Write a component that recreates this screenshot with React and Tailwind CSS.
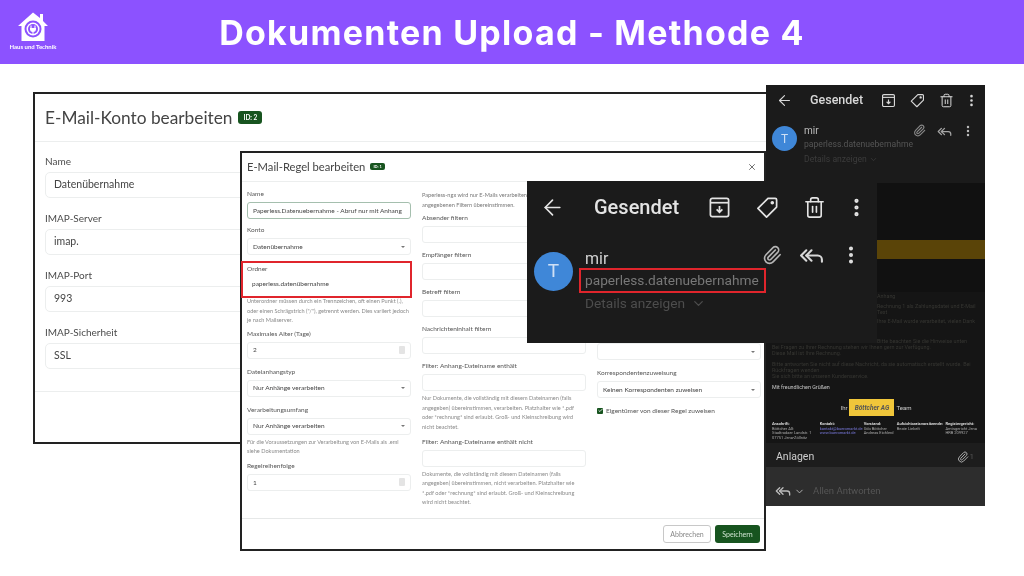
import React from 'react';
import { ArrowLeft, Trash2, EllipsisVertical, Paperclip, ReplyAll, ChevronDown, X, Check } from 'lucide-react';

const uiFont = { fontFamily: 'Lato, sans-serif' };

// Archive box with arrow, not quite the lucide one
function MoveToInbox({ size = 24 }) {
  return (
    <svg width={size} height={size} viewBox="0 0 24 24" fill="none" stroke="currentColor" strokeWidth="1.8">
      <rect x="2.5" y="2.5" width="19" height="19" rx="2" />
      <path d="M2.5 7h19" />
      <path d="M12 10.5v6M9 14l3 3 3-3" />
    </svg>
  );
}

// Label tag, square corner top right
function LabelTag({ size = 24 }) {
  return (
    <svg width={size} height={size} viewBox="0 0 24 24" fill="none" stroke="currentColor" strokeWidth="1.8" strokeLinejoin="round">
      <path d="M21.5 4v7.500L11 22 2 13 12.500 2.500H20a1.500 1.500 0 0 1 1.500 1.500z" />
      <circle cx="17" cy="7" r="1" fill="currentColor" />
    </svg>
  );
}

function HouseLogo() {
  return (
    <svg width="32" height="32" viewBox="0 0 32 32">
      <path d="M16 1.5 L23 7 V3 H26 V10 L31 15 H27.5 V30 H4.5 V15 H1 Z" fill="#fff" />
      <circle cx="16" cy="18" r="8.5" fill="#8c52ff" />
      <circle cx="16" cy="18" r="6.5" fill="#fff" />
      <circle cx="16" cy="18" r="5" fill="#8c52ff" />
      <path d="M14 14.5v3M18 14.5v3M13.5 17.5h5c0 2-1 3-2.5 3s-2.500-1-2.500-3zM16 20.500v3" stroke="#fff" strokeWidth="1.100" fill="#fff" />
    </svg>
  );
}

function BigField({ label, value }) {
  return (
    <div>
      <div className="text-[10px] leading-[14px] text-[#4b4b4b] mb-[4px]">{label}</div>
      <div className="h-[26px] rounded-[5px] border border-[#eceeee] flex items-center pl-[8px] text-[10.5px] text-[#444]">{value}</div>
    </div>
  );
}

function Field({ label, value, kind, focus, help, className = '' }) {
  return (
    <div className={className}>
      <div className="text-[6.5px] leading-[8px] text-[#555] mb-[4px]">{label}</div>
      <div className={`h-[17px] rounded-[3px] border flex items-center justify-between pl-[5px] pr-[5px] text-[6.5px] text-[#444] ${focus ? 'border-[#a5bfae] border-[1.5px]' : 'border-[#eceeee]'}`}>
        <span className="whitespace-nowrap">{value}</span>
        {kind === 'select' && <span className="w-0 h-0 border-x-[2px] border-x-transparent border-t-[2px] border-t-[#777]" />}
        {kind === 'number' && <span className="w-[6px] h-[8px] rounded-[1px] bg-[#e4e4e4]" />}
      </div>
      {help && <p className="mt-[2px] text-[5.6px] leading-[9.6px] text-[#8a8a8a]">{help}</p>}
    </div>
  );
}

function SmallIconBar() {
  return (
    <div className="flex items-center h-[30px] pl-[10px] text-[#d8d8d8]">
      <ArrowLeft size={17} strokeWidth={1.6} />
      <span className="ml-[17px] w-[52px] text-[12.5px] font-medium whitespace-nowrap" style={{ fontFamily: 'Roboto, sans-serif' }}>Gesendet</span>
      <span className="ml-[19px]"><MoveToInbox size={15} /></span>
      <span className="ml-[14px]"><LabelTag size={15} /></span>
      <span className="ml-[14px]"><Trash2 size={15} strokeWidth={1.6} /></span>
      <span className="ml-[10px]"><EllipsisVertical size={15} strokeWidth={2.2} /></span>
    </div>
  );
}

function FooterCol({ title, lines, className = '' }) {
  return (
    <div className={`text-[4px] leading-[4.5px] text-[#aaa] whitespace-nowrap ${className}`}>
      <div className="font-bold text-[#ddd]">{title}</div>
      {lines.map((line) => <div key={line}>{line}</div>)}
    </div>
  );
}

function PhoneWindow() {
  return (
    <div className="absolute left-[766px] top-[85px] w-[219px] h-[421px] bg-[#1b1b1b] flex flex-col overflow-hidden" style={{ fontFamily: 'Roboto, sans-serif' }}>
      <SmallIconBar />
      <div className="flex pl-[6px] pt-[11px] h-[68px]">
        <div className="w-[25px] h-[25px] rounded-full bg-[#3f87d8] text-[#cfe0f5] text-[12px] flex items-center justify-center">T</div>
        <div className="ml-[7px] w-[109px]">
          <div className="text-[10px] leading-[12px] text-[#bdbdbd] mt-[-1px]">mir</div>
          <div className="text-[8.6px] leading-[12px] mt-[1px] text-[#555] whitespace-nowrap">paperless.datenuebernahme</div>
          <div className="text-[8.6px] leading-[12px] mt-[3px] text-[#3c3c3c] flex items-center gap-[2px] whitespace-nowrap">Details anzeigen <ChevronDown size={9} /></div>
        </div>
        <div className="flex items-start text-[#8a8a8a] mt-[-2px]">
          <Paperclip size={13} />
          <ReplyAll size={15} className="ml-[11px] text-[#a5a5a5]" />
          <EllipsisVertical size={14} strokeWidth={2.2} className="ml-[9px] text-[#bbb]" />
        </div>
      </div>
      {/* mail body, mostly hidden behind the bigger crop */}
      <div className="h-[109px] bg-[#111] pt-[57px]">
        <div className="h-[19px] bg-[#5a4408]" />
      </div>
      <div className="flex-none h-[151px] bg-[#151515] pl-[6px] pr-[8px] text-[#363632] text-[5.4px] leading-[6px] flex flex-col overflow-hidden">
        <div className="pl-[105px] mt-[1px]">Anhang</div>
        <div className="pl-[105px] mt-[4px]">Rechnung 1 als Zahlungsdatei und E-Mail Text</div>
        <div className="pl-[105px] mt-[3px]">Ihre E-Mail wurde verarbeitet, vielen Dank</div>
        <div className="pl-[105px] mt-[14px]">Bitte beachten Sie die Hinweise unten</div>
        <div>Bei Fragen zu Ihrer Rechnung stehen wir Ihnen gern zur Verfügung.</div>
        <div>Diese Mail ist Ihre Rechnung.</div>
        <div className="mt-[5px]">Bitte antworten Sie nicht auf diese Nachricht, da sie automatisch erstellt wurde. Bei Rückfragen wenden</div>
        <div>Sie sich bitte an unseren Kundenservice.</div>
        <div className="mt-[5px] text-[#c8c8c8]">Mit freundlichen Grüßen</div>
        <div className="flex items-center justify-center mt-[9px] gap-[2px] text-[#ccc] text-[6px] pl-[3px]">
          <span>Ihr</span>
          <span className="w-[45px] h-[17px] bg-[#f0c63a] text-[#555] text-[6.5px] font-bold italic flex items-center justify-center whitespace-nowrap">Böttcher AG</span>
          <span>Team</span>
        </div>
        <div className="flex mt-[6px]">
          <FooterCol className="w-[49px]" title="Anschrift:" lines={['Böttcher AG', 'Stadtrodaer Landstr. 1', '07751 Jena-Zöllnitz']} />
          <div className="w-[45px] text-[4px] leading-[4.5px] text-[#7b7be0] whitespace-nowrap">
            <div className="font-bold text-[#ddd]">Kontakt:</div>
            <div>kontakt@bueromarkt.de</div>
            <div>www.bueromarkt.de</div>
          </div>
          <FooterCol className="w-[34px]" title="Vorstand:" lines={['Udo Böttcher', 'Andreas Eichlerd']} />
          <FooterCol className="w-[50px]" title="Aufsichtsratsvorsitzende:" lines={['Beate Liebelt']} />
          <FooterCol title="Registergericht:" lines={['Amtsgericht Jena', 'HRB 209927']} />
        </div>
      </div>
      <div className="h-[24px] bg-[#1d1d1d] flex items-center justify-between pl-[10px] pr-[11px] pt-[3px] text-[10.500px] text-[#cfcfcf]">
        <span>Anlagen</span>
        <span className="flex items-center gap-[1px] text-[#555] text-[8px]"><Paperclip size={12} className="text-[#aaa]" />1</span>
      </div>
      <div className="h-[39px] bg-[#2d2d2d] flex items-center pl-[9px] pt-[9px] text-[#bbb]">
        <ReplyAll size={16} />
        <ChevronDown size={11} className="ml-[3px]" />
        <span className="ml-[8px] text-[9.500px] text-[#555]">Allen Antworten</span>
      </div>
    </div>
  );
}

function CropWindow() {
  return (
    <div className="absolute left-[527px] top-[181px] w-[350px] h-[162px] bg-[#1b1b1b] flex flex-col" style={{ fontFamily: 'Roboto, sans-serif' }}>
      <div className="flex items-center h-[24px] mt-[14px] pl-[13px] text-[#e4e4e4]">
        <ArrowLeft size={25} strokeWidth={1.6} />
        <span className="ml-[29px] w-[84px] text-[20px] font-medium whitespace-nowrap">Gesendet</span>
        <span className="ml-[30px]"><MoveToInbox size={23} /></span>
        <span className="ml-[25px]"><LabelTag size={23} /></span>
        <span className="ml-[24px]"><Trash2 size={23} strokeWidth={1.7} /></span>
        <span className="ml-[19px]"><EllipsisVertical size={23} strokeWidth={2.4} /></span>
      </div>
      <div className="flex mt-[30px] pl-[7px]">
        <div className="w-[39px] h-[39px] mt-[3px] rounded-full bg-[#3f87d8] text-[#cfe0f5] text-[19px] flex items-center justify-center">T</div>
        <div className="ml-[6px] w-[187px]">
          <div className="text-[16px] leading-[20px] text-[#d2d2d2] pl-[6px]">mir</div>
          <div className="mt-[-1px] h-[25px] border-[2px] border-[#e0252c] flex items-center pl-[4px] text-[13.7px] text-[#787878] whitespace-nowrap">paperless.datenuebernahme</div>
          <div className="mt-[1px] pl-[6px] text-[13.7px] leading-[18px] text-[#4d4d4d] flex items-center gap-[6px] whitespace-nowrap">Details anzeigen <ChevronDown size={15} /></div>
        </div>
        <div className="flex items-start text-[#b5b5b5] mt-[-4px]">
          <Paperclip size={20} className="ml-[-4px]" />
          <ReplyAll size={25} className="ml-[17px] text-[#d8d8d8] mt-[-2px]" />
          <EllipsisVertical size={22} strokeWidth={2.4} className="ml-[16px] text-[#e0e0e0] mt-[-1px]" />
        </div>
      </div>
    </div>
  );
}

function RuleWindow() {
  return (
    <div className="absolute left-[240px] top-[151px] w-[526px] h-[400px] bg-white border-2 border-[#222] flex flex-col" style={uiFont}>
      <div className="h-[29px] flex items-center justify-between px-[5px] border-b border-[#eceeee] flex-none">
        <div className="flex items-center gap-[5px]">
          <span className="text-[11.2px] text-[#444]">E-Mail-Regel bearbeiten</span>
          <span className="h-[7px] px-[3px] rounded-[2px] bg-[#17541f] text-white text-[4px] font-bold flex items-center">ID: 1</span>
        </div>
        <X size={10} className="text-[#555] mr-[2px]" />
      </div>
      <div className="flex-1 flex pl-[5px] pt-[8px] gap-[11px]">
        <div className="w-[164px] flex flex-col">
          <Field label="Name" value="Paperless.Datenuebernahme - Abruf nur mit Anhang" focus />
          <Field className="mt-[7px]" label="Konto" value="Datenübernahme" kind="select" />
          <div className="mt-[6px] ml-[-6px] w-[171px] h-[37px] border-2 border-[#e0252c] pl-[4px] pr-[1px] pt-[2px]">
            <div className="text-[6.5px] leading-[8px] text-[#555] mb-[3px]">Ordner</div>
            <div className="text-[6.5px] leading-[15px] text-[#444] pl-[5px]">paperless.datenübernahme</div>
          </div>
          <p className="mt-[-2px] text-[5.6px] leading-[9.6px] text-[#8a8a8a]">Unterordner müssen durch ein Trennzeichen, oft einen Punkt (.), oder einen Schrägstrich (&quot;/&quot;), getrennt werden. Dies variiert jedoch je nach Mailserver.</p>
          <Field className="mt-[5px]" label="Maximales Alter (Tage)" value="2" kind="number" />
          <Field className="mt-[9px]" label="Dateianhangstyp" value="Nur Anhänge verarbeiten" kind="select" />
          <Field className="mt-[9px]" label="Verarbeitungsumfang" value="Nur Anhänge verarbeiten" kind="select" help="Für die Voraussetzungen zur Verarbeitung von E-Mails als .eml siehe Dokumentation" />
          <Field className="mt-[6px]" label="Regelreihenfolge" value="1" kind="number" />
        </div>
        <div className="w-[164px] flex flex-col">
          <p className="text-[5.6px] leading-[9.6px] text-[#777]">Paperless-ngx wird nur E-Mails verarbeiten, die mit allen unten angegebenen Filtern übereinstimmen.</p>
          <Field className="mt-[5px]" label="Absender filtern" value="" />
          <Field className="mt-[8px]" label="Empfänger filtern" value="" />
          <Field className="mt-[8px]" label="Betreff filtern" value="" />
          <Field className="mt-[8px]" label="Nachrichteninhalt filtern" value="" />
          <Field className="mt-[8px]" label="Filter: Anhang-Dateiname enthält" value="" help="Nur Dokumente, die vollständig mit diesem Dateinamen (falls angegeben) übereinstimmen, verarbeiten. Platzhalter wie *.pdf oder *rechnung* sind erlaubt. Groß- und Kleinschreibung wird nicht beachtet." />
          <Field className="mt-[6px]" label="Filter: Anhang-Dateiname enthält nicht" value="" help="Dokumente, die vollständig mit diesem Dateinamen (falls angegeben) übereinstimmen, nicht verarbeiten. Platzhalter wie *.pdf oder *rechnung* sind erlaubt. Groß- und Kleinschreibung wird nicht beachtet." />
        </div>
        <div className="w-[164px] flex flex-col pt-[153px]">
          <div className="h-[17px] rounded-[3px] border border-[#eceeee] flex items-center justify-end pr-[5px]">
            <span className="w-0 h-0 border-x-[2px] border-x-transparent border-t-[2px] border-t-[#777]" />
          </div>
          <Field className="mt-[9px]" label="Korrespondentenzuweisung" value="Keinen Korrespondenten zuweisen" kind="select" />
          <div className="mt-[8px] flex items-center gap-[3px] text-[6.500px] text-[#555]">
            <span className="w-[6px] h-[6px] rounded-[1px] bg-[#17541f] flex items-center justify-center"><Check size={5} strokeWidth={4} className="text-white" /></span>
            Eigentümer von dieser Regel zuweisen
          </div>
        </div>
      </div>
      <div className="h-[31px] border-t border-[#e6e8e8] flex-none flex items-center justify-end gap-[4px] pr-[4px]">
        <span className="h-[18px] w-[48px] rounded-[3px] border border-[#c8c8c8] text-[#888] text-[7px] flex items-center justify-center">Abbrechen</span>
        <span className="h-[18px] w-[45px] rounded-[3px] bg-[#17541f] text-[#cfe3d0] text-[7px] flex items-center justify-center">Speichern</span>
      </div>
    </div>
  );
}

function AccountWindow() {
  return (
    <div className="absolute left-[33px] top-[92px] w-[740px] h-[352px] bg-white border-2 border-[#222] flex flex-col" style={uiFont}>
      <div className="h-[48px] flex-none flex items-center gap-[6px] pl-[10px] border-b border-[#eceeee]">
        <span className="text-[17.3px] text-[#444]">E-Mail-Konto bearbeiten</span>
        <span className="h-[13px] px-[5px] rounded-[3px] bg-[#17541f] text-white text-[6.500px] font-bold flex items-center">ID: 2</span>
      </div>
      <div className="h-[250px] flex-none px-[10px] pt-[12px] flex flex-col gap-[13px] border-b border-[#eceeee]">
        <BigField label="Name" value="Datenübernahme" />
        <BigField label="IMAP-Server" value="imap." />
        <BigField label="IMAP-Port" value="993" />
        <BigField label="IMAP-Sicherheit" value="SSL" />
      </div>
    </div>
  );
}

export default function App() {
  return (
    <div className="relative w-[1024px] h-[576px] bg-white overflow-hidden blur-[0.4px]">
      <header className="relative h-[64px] bg-[#8c52ff] flex items-center justify-center">
        <div className="absolute left-[9px] top-[11px] w-[48px] flex flex-col items-center text-white">
          <HouseLogo />
          <span className="text-[6px] font-bold leading-[7px] whitespace-nowrap" style={uiFont}>Haus und Technik</span>
        </div>
        <h1 className="text-[34px] font-bold text-white whitespace-nowrap tracking-[1.25px]" style={{ fontFamily: 'Inter, sans-serif' }}>Dokumenten Upload - Methode 4</h1>
      </header>
      <AccountWindow />
      <RuleWindow />
      <PhoneWindow />
      <CropWindow />
    </div>
  );
}
